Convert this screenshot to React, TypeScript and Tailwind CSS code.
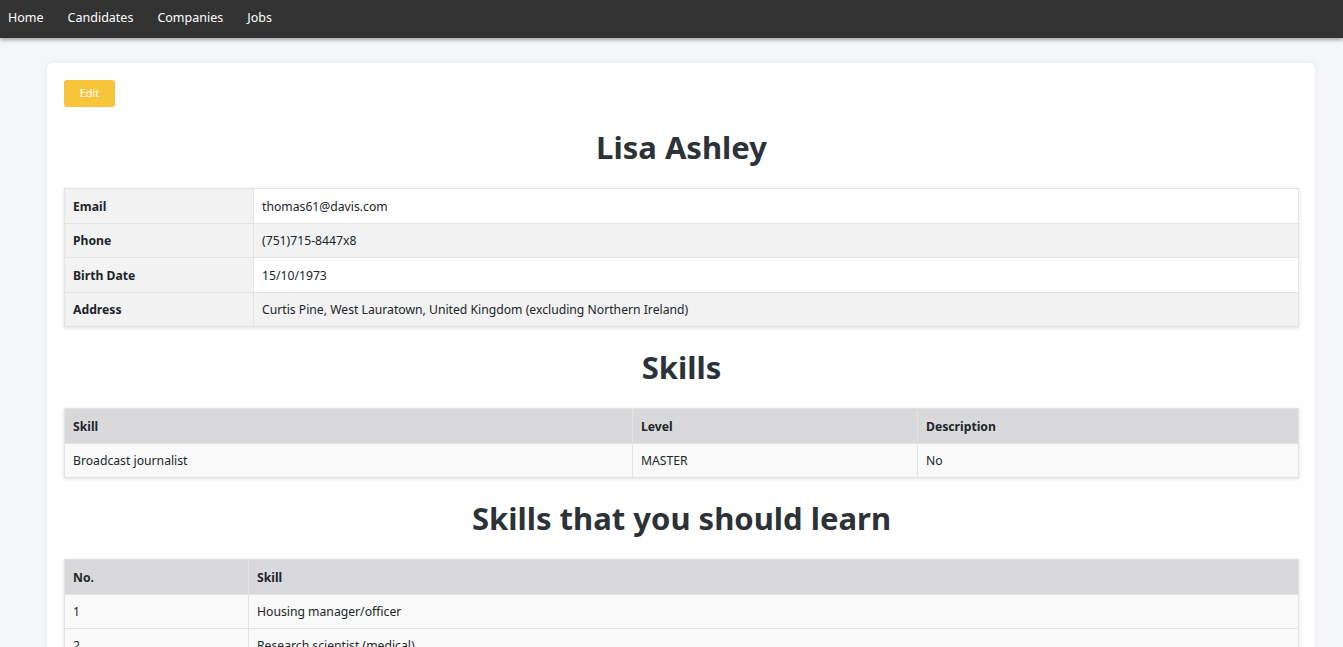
const info = [
  { label: "Email", value: "thomas61@davis.com" },
  { label: "Phone", value: "(751)715-8447x8" },
  { label: "Birth Date", value: "15/10/1973" },
  { label: "Address", value: "Curtis Pine, West Lauratown, United Kingdom (excluding Northern Ireland)" },
];

const skills = [{ name: "Broadcast journalist", level: "MASTER", description: "No" }];

const suggestions = ["Housing manager/officer", "Research scientist (medical)", "Engineer, broadcasting (operations)"];

const navLinks = ["Home", "Candidates", "Companies", "Jobs"];

function Heading({ children }: { children: React.ReactNode }) {
  return <h2 className="mb-[21px] mt-5 text-center text-[31px] font-bold leading-[40px] text-[#2c3338]">{children}</h2>;
}

export default function App() {
  return (
    <div className="min-h-screen bg-[#f5f6f8] text-[12.2px] text-[#212529]" style={{ fontFamily: '"Noto Sans", "Open Sans", sans-serif' }}>
      <nav className="relative z-10 flex h-[38px] items-center gap-6 bg-[#333333] pb-[2px] pl-2 text-white shadow-[0_2px_4px_rgba(0,0,0,0.35)]">
        {navLinks.map((link) => (
          <a key={link} href="#" className="text-[12.5px] text-white">
            {link}
          </a>
        ))}
      </nav>

      <main className="pl-[47px] pr-[28px] pt-[25px]">
        <div className="rounded-md bg-white pb-6 pl-[17px] pr-4 pt-[17px] shadow-[0_0_6px_rgba(0,0,0,0.06)]">
          <button type="button" className="h-[27px] w-[51px] rounded-[3px] bg-[#f8c53a] text-[11px] text-white">
            Edit
          </button>

          <Heading>Lisa Ashley</Heading>

          <table className="w-full border-collapse shadow-[0_1px_4px_rgba(0,0,0,0.12)]">
            <tbody>
              {info.map((row, index) => (
                <tr key={row.label} className="h-[34.5px]">
                  <th className="w-[189px] border border-[#e3e3e3] bg-[#f2f2f2] px-2 pt-[2px] text-left font-bold">{row.label}</th>
                  <td className={`border border-[#e3e3e3] px-2 pt-[2px] ${index % 2 === 1 ? "bg-[#f2f2f2]" : "bg-white"}`}>{row.value}</td>
                </tr>
              ))}
            </tbody>
          </table>

          <Heading>Skills</Heading>

          <table className="w-full border-collapse shadow-[0_1px_4px_rgba(0,0,0,0.12)]">
            <thead>
              <tr className="h-[35px] bg-[#d9d9db]">
                <th className="w-[568px] border border-[#e3e3e3] px-2 pt-[3px] text-left font-bold">Skill</th>
                <th className="w-[285px] border border-[#e3e3e3] px-2 pt-[3px] text-left font-bold">Level</th>
                <th className="border border-[#e3e3e3] px-2 pt-[3px] text-left font-bold">Description</th>
              </tr>
            </thead>
            <tbody>
              {skills.map((skill) => (
                <tr key={skill.name} className="h-[34px] bg-[#f9f9f9]">
                  <td className="border border-[#e3e3e3] px-2 pt-[2px]">{skill.name}</td>
                  <td className="border border-[#e3e3e3] px-2 pt-[2px]">{skill.level}</td>
                  <td className="border border-[#e3e3e3] px-2 pt-[2px]">{skill.description}</td>
                </tr>
              ))}
            </tbody>
          </table>

          <Heading>Skills that you should learn</Heading>

          <table className="w-full border-collapse shadow-[0_1px_4px_rgba(0,0,0,0.12)]">
            <thead>
              <tr className="h-[35px] bg-[#d9d9db]">
                <th className="w-[184px] border border-[#e3e3e3] px-2 pt-[3px] text-left font-bold">No.</th>
                <th className="border border-[#e3e3e3] px-2 pt-[3px] text-left font-bold">Skill</th>
              </tr>
            </thead>
            <tbody>
              {suggestions.map((name, index) => (
                <tr key={name} className="h-[34px] bg-[#f9f9f9]">
                  <td className="border border-[#e3e3e3] px-2 pt-[2px]">{index + 1}</td>
                  <td className="border border-[#e3e3e3] px-2 pt-[2px]">{name}</td>
                </tr>
              ))}
            </tbody>
          </table>
        </div>
      </main>
    </div>
  );
}
